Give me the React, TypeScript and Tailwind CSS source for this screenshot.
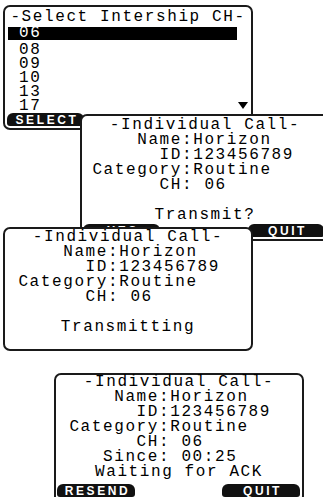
import type { ReactNode } from "react";

const lcd =
  "font-['Liberation_Mono','DejaVu_Sans_Mono',monospace] text-[16px] tracking-[1.6px] text-black slashed-zero whitespace-pre";

const keyFont =
  "font-['Liberation_Sans',Arial,sans-serif] font-bold text-[12px] tracking-[2.6px] text-white leading-none";

type ScreenProps = {
  className: string;
  children: ReactNode;
};

function Screen({ className, children }: ScreenProps) {
  return (
    <div
      className={`absolute flex w-[250px] flex-col rounded-[7px] border-2 border-[#1a1a1a] bg-white ${lcd} ${className}`}
    >
      {children}
    </div>
  );
}

function Line({ children }: { children?: ReactNode }) {
  return <div className="h-[15px] text-center leading-[15px]">{children}</div>;
}

function Field({ label, value, col }: { label: string; value: string; col: number }) {
  return (
    <div className="flex h-[15px] leading-[15px]">
      <span className="shrink-0 text-right" style={{ width: col }}>
        {label}
      </span>
      <span>{value}</span>
    </div>
  );
}

function Key({ label, className }: { label: string; className: string }) {
  return (
    <div
      className={`flex h-[13px] items-center justify-center rounded-t-[6px] rounded-b-[3px] bg-[#111] pl-[3px] ${keyFont} ${className}`}
    >
      {label}
    </div>
  );
}

function CallDetails({ col }: { col: number }) {
  return (
    <>
      <Line>-Individual Call-</Line>
      <Field label="Name" value=":Horizon" col={col} />
      <Field label="ID" value=":123456789" col={col} />
      <Field label="Category" value=":Routine" col={col} />
      <Field label="CH" value=": 06" col={col} />
    </>
  );
}

export default function App() {
  return (
    <div className="relative h-[497px] w-[323px] overflow-hidden bg-white">
      {/* channel list */}
      <Screen className="left-[3px] top-[5px] h-[125px]">
        <div className="mt-[3px] h-[14px] text-center leading-[14px]">-Select Intership CH-</div>
        <div className="ml-[3px] mt-[3px] h-[13px] w-[229px] bg-black pl-[11px] leading-[13px] text-white">
          06
        </div>
        <div className="mt-[3px] flex flex-col pl-[14px] leading-[14px]">
          {["08", "09", "10", "13", "17"].map((ch) => (
            <div key={ch} className="h-[14px]">
              {ch}
            </div>
          ))}
        </div>
        <svg className="absolute left-[233px] top-[95px]" width="10" height="7" viewBox="0 0 10 7">
          <polygon points="0,0 10,0 5,7" fill="#000" />
        </svg>
        <Key label="SELECT" className="mb-[2px] ml-[2px] mt-auto w-[77px]" />
      </Screen>

      {/* transmit confirm */}
      <Screen className="left-[80px] top-[114px] h-[127px] pt-[2px]">
        <CallDetails col={100} />
        <Line />
        <Line>Transmit?</Line>
        <div className="mb-[2px] mt-auto flex justify-between pl-[1px] pr-[4px]">
          <Key label="YES" className="w-[77px]" />
          <Key label="QUIT" className="w-[76px]" />
        </div>
      </Screen>

      {/* transmitting */}
      <Screen className="left-[3px] top-[227px] h-[124px] pt-[1px]">
        <CallDetails col={103} />
        <Line />
        <Line>Transmitting</Line>
      </Screen>

      {/* waiting for ack */}
      <Screen className="left-[54px] top-[373px] h-[130px]">
        <CallDetails col={103} />
        <Field label="Since" value=": 00:25" col={103} />
        <Line>Waiting for ACK</Line>
        <div className="mt-[4px] flex justify-between pl-[1px] pr-[2px]">
          <Key label="RESEND" className="w-[78px]" />
          <Key label="QUIT" className="w-[78px]" />
        </div>
      </Screen>
    </div>
  );
}
